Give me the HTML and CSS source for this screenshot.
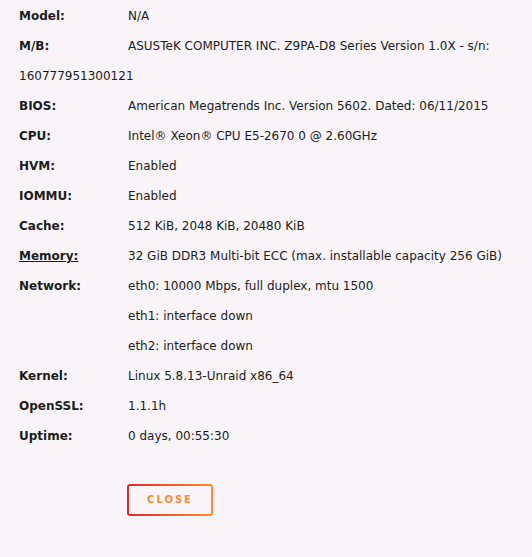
FILE: index.html
```html
<html lang="en">
<head>
    <meta charset="UTF-8">
    <meta name="viewport" content="width=device-width, initial-scale=1.0">
    <title>System Info</title>
    <link rel="stylesheet" href="styles.css">
</head>
<body>

<div class="info">
    <div class="row"><span class="label">Model:</span>N/A</div>
    <div class="row"><span class="label">M/B:</span>ASUSTeK COMPUTER INC. Z9PA-D8 Series Version 1.0X - s/n: 160777951300121</div>
    <div class="row"><span class="label">BIOS:</span>American Megatrends Inc. Version 5602. Dated: 06/11/2015</div>
    <div class="row"><span class="label">CPU:</span>Intel&reg; Xeon&reg; CPU E5-2670 0 @ 2.60GHz</div>
    <div class="row"><span class="label">HVM:</span>Enabled</div>
    <div class="row"><span class="label">IOMMU:</span>Enabled</div>
    <div class="row"><span class="label">Cache:</span>512 KiB, 2048 KiB, 20480 KiB</div>
    <div class="row"><span class="label"><a href="#">Memory:</a></span>32 GiB DDR3 Multi-bit ECC (max. installable capacity 256 GiB)</div>
    <div class="row"><span class="label">Network:</span>eth0: 10000 Mbps, full duplex, mtu 1500</div>
    <div class="row"><span class="label"></span>eth1: interface down</div>
    <div class="row"><span class="label"></span>eth2: interface down</div>
    <div class="row"><span class="label">Kernel:</span>Linux 5.8.13-Unraid x86_64</div>
    <div class="row"><span class="label">OpenSSL:</span>1.1.1h</div>
    <div class="row"><span class="label">Uptime:</span>0 days, 00:55:30</div>

    <div class="actions">
        <button class="close">Close</button>
    </div>
</div>

</body>
</html>
```

FILE: styles.css
```css
body {
    margin: 0;
    padding: 0;
    background-color: #f8f4f7;
    color: #1c1c1c;
    font-family: "DejaVu Sans", sans-serif;
    font-size: 12px;
}
.info {
    padding: 1px 19px 0;
    line-height: 30px;
}
.label {
    display: inline-block;
    width: 109px;
    font-weight: bold;
}
.label a {
    color: #1c1c1c;
    text-decoration: underline;
}
.actions {
    margin-top: 33px;
    padding-left: 108px;
}
.close {
    width: 86px;
    height: 32px;
    border: 2px solid transparent;
    border-radius: 3px;
    background:
        linear-gradient(#f8f4f7, #f8f4f7) padding-box,
        linear-gradient(90deg, #e22828, #ff8d2f) border-box;
    color: #ff8d2f;
    font-family: "DejaVu Sans", sans-serif;
    font-size: 10px;
    font-weight: bold;
    letter-spacing: 2px;
    text-transform: uppercase;
    line-height: 1;
    cursor: pointer;
}
```
